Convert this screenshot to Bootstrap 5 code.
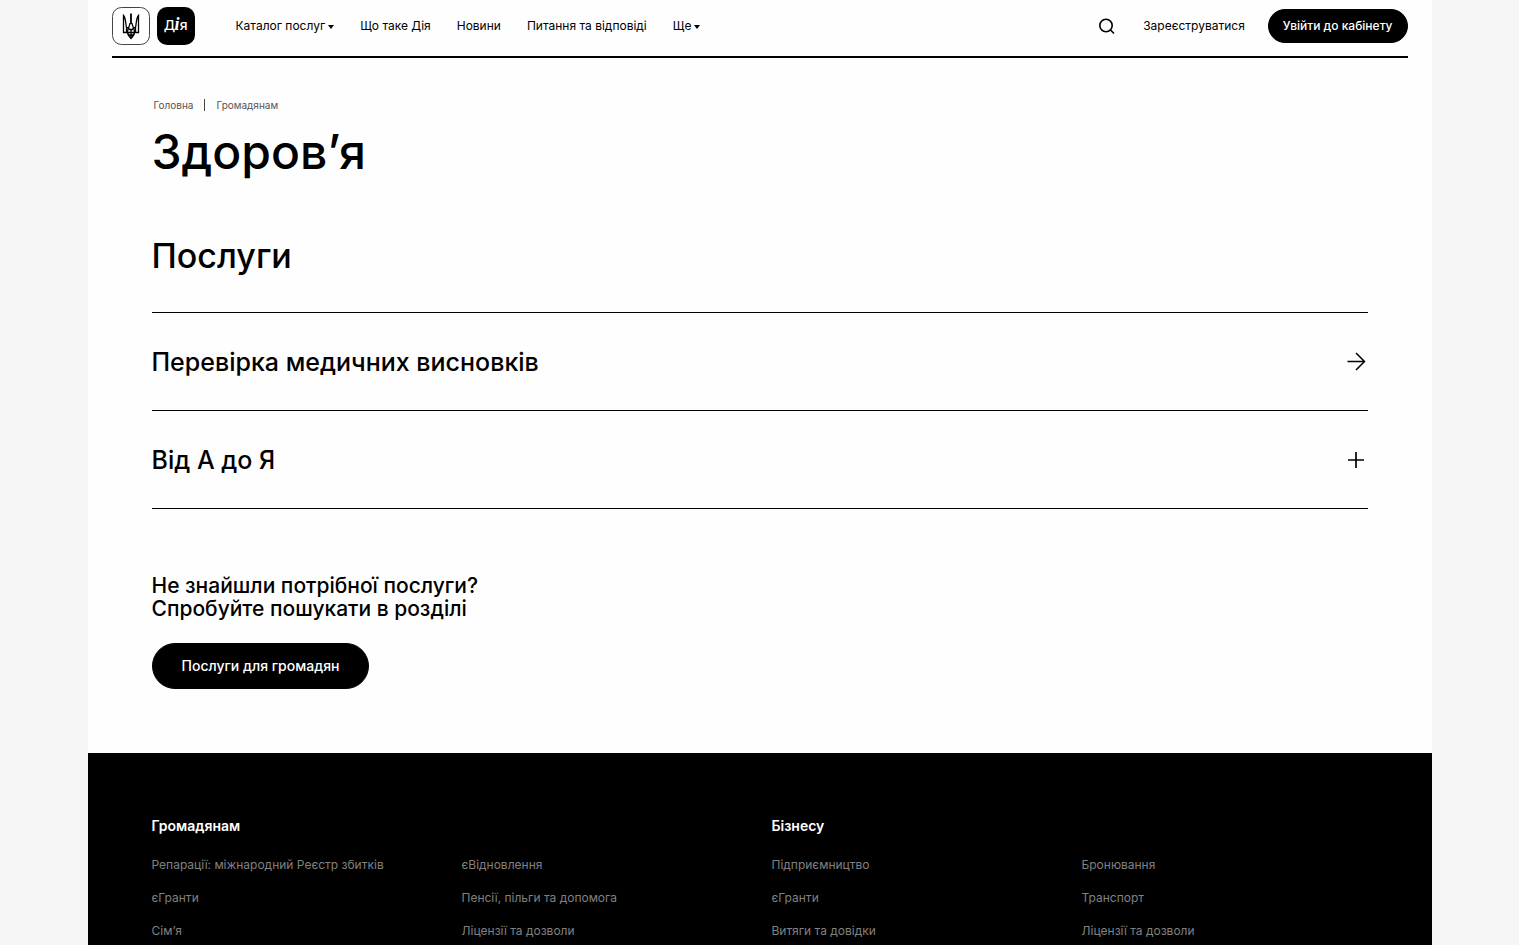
<!DOCTYPE html>
<html lang="uk">
<head>
<meta charset="utf-8">
<meta name="viewport" content="width=device-width, initial-scale=1">
<title>Здоров’я | Дія</title>
<link href="https://cdn.jsdelivr.net/npm/bootstrap@5.3.0/dist/css/bootstrap.min.css" rel="stylesheet">
<style>
  body { background: #f5f5f5; color: #000; font-family: Inter, "Liberation Sans", sans-serif; font-size: 12px; line-height: 16px; }
  a { color: inherit; text-decoration: none; }
  .shell { max-width: 1344px; background: #fefefe; }
  .topbar { height: 58px; border-bottom: 2px solid #000; padding-bottom: 4px; }
  .site-menu { gap: 26px; margin-left: 40px; }
  .menu-toggle { font-size: 12px; line-height: 16px; color: #000; }
  .menu-toggle svg { margin-left: 3px; }
  .tools { gap: 23px; }
  .btn-pill { --bs-btn-color: #fff; --bs-btn-bg: #000; --bs-btn-border-color: #000; --bs-btn-hover-color: #fff; --bs-btn-hover-bg: #333; border-radius: 50px; font-weight: 500; }
  .btn-login { font-size: 12px; line-height: 16px; padding: 8px 14px; font-weight: 450; }
  .btn-more { font-size: 14px; line-height: 20px; padding: 12px 29px; }
  .inner { padding-left: 64px; padding-right: 64px; }
  .crumbs { font-size: 10px; line-height: 14px; color: #555; padding: 40px 2px 0; gap: 11px; }
  .crumb-bar { width: 1px; height: 12px; background: #444; }
  h1 { font-size: 48px; line-height: 56px; font-weight: 500; margin: 12px 0 0; }
  h2 { font-size: 34px; line-height: 40px; font-weight: 450; margin: 56px 0 36px; }
  .service-list { border-top: 1px solid #000; }
  .service { font-size: 25px; line-height: 32px; font-weight: 450; padding: 33px 0 32px; border-bottom: 1px solid #000; color: #000; }
  .hint { font-size: 21px; line-height: 23px; font-weight: 450; margin: 65px 0 23px; }
  .site-footer { background: #000; color: #808080; margin-top: 64px; padding-top: 63px; padding-bottom: 4px; }
  .foot-title { font-size: 14px; line-height: 20px; font-weight: 600; color: #fff; margin: 0 0 21px; }
  .foot-links { display: grid; grid-template-columns: 1fr 1fr; gap: 17px 24px; }
</style>
</head>
<body>
<div class="shell mx-auto min-vh-100 d-flex flex-column">
  <header class="px-4">
    <div class="topbar d-flex align-items-center justify-content-between">
      <div class="d-flex align-items-center">
        <a href="#" class="d-flex" aria-label="Дія">
          <svg width="84" height="38" viewBox="0 0 84 38">
            <rect x=".5" y=".5" width="37" height="37" rx="9" fill="#fff" stroke="#444"/>
            <g fill="none" stroke="#000" stroke-width="1.300">
              <path d="M11.500 8.500v17h15v-17c-2.500 3-2 8-3 12-1.500 0-2.500.500-3 2h-3c-.5-1.500-1.500-2-3-2-1-4-.5-9-3-12z"/>
              <path d="M18 16c0 3-2.500 5-2.500 9.500 0 3 2 4 3.500 6 1.500-2 3.500-3 3.500-6 0-4.500-2.500-6.500-2.500-9.500M15.500 26c1 2 2 2.500 3.500 2.500s2.500-.5 3.500-2.500M19 22v9M14.500 21v4M23.500 21v4"/>
              <path d="M19 6.500V17" stroke-width="1.800"/>
            </g>
            <rect x="45" width="38" height="38" rx="10"/>
            <text x="64" y="23" fill="#fff" text-anchor="middle" font-family="Noto Sans, sans-serif" font-size="14" font-weight="500">Д<tspan font-family="Liberation Serif, serif" font-style="italic" font-weight="700" font-size="18">і</tspan>я</text>
          </svg>
        </a>
        <nav class="site-menu d-flex align-items-center">
          <button class="menu-toggle btn border-0 p-0" type="button">Каталог послуг<svg width="6" height="4" viewBox="0 0 6 4"><path d="M0 0h6L3 4z"/></svg></button>
          <a href="#">Що таке Дія</a>
          <a href="#">Новини</a>
          <a href="#">Питання та відповіді</a>
          <button class="menu-toggle btn border-0 p-0" type="button">Ще<svg width="6" height="4" viewBox="0 0 6 4"><path d="M0 0h6L3 4z"/></svg></button>
        </nav>
      </div>
      <div class="tools d-flex align-items-center">
        <button class="btn border-0 p-0 d-flex me-1" type="button" aria-label="Пошук">
          <svg width="18" height="18" viewBox="0 0 18 18" fill="none" stroke="#000" stroke-width="1.600"><circle cx="8" cy="8.500" r="6.200"/><path d="M12.500 13l3.500 3.500"/></svg>
        </button>
        <a href="#">Зареєструватися</a>
        <button class="btn btn-pill btn-login" type="button">Увійти до кабінету</button>
      </div>
    </div>
  </header>

  <main class="inner">
    <nav class="crumbs d-flex align-items-center" aria-label="Навігація">
      <a href="#">Головна</a><span class="crumb-bar"></span><a href="#">Громадянам</a>
    </nav>
    <h1>Здоров’я</h1>
    <h2>Послуги</h2>
    <div class="service-list">
      <a href="#" class="service d-flex align-items-center justify-content-between">
        Перевірка медичних висновків
        <svg width="24" height="24" viewBox="0 0 24 24" fill="none" stroke="#000" stroke-width="1.500"><path d="M3.500 11.500h17M12 3l8.500 8.500L12 20"/></svg>
      </a>
      <button type="button" class="service btn border-start-0 border-end-0 border-top-0 rounded-0 w-100 d-flex align-items-center justify-content-between">
        Від А до Я
        <svg width="24" height="24" viewBox="0 0 24 24" fill="none" stroke="#000" stroke-width="1.700"><path d="M4 12h16M12 4v16"/></svg>
      </button>
    </div>
    <p class="hint">Не знайшли потрібної послуги?<br>Спробуйте пошукати в розділі</p>
    <button class="btn btn-pill btn-more" type="button">Послуги для громадян</button>
  </main>

  <footer class="site-footer inner flex-grow-1">
    <div class="row gx-4">
      <section class="col-6">
        <h3 class="foot-title">Громадянам</h3>
        <div class="foot-links">
          <a href="#">Репарації: міжнародний Реєстр збитків</a><a href="#">єВідновлення</a>
          <a href="#">єГранти</a><a href="#">Пенсії, пільги та допомога</a>
          <a href="#">Сім’я</a><a href="#">Ліцензії та дозволи</a>
        </div>
      </section>
      <section class="col-6">
        <h3 class="foot-title">Бізнесу</h3>
        <div class="foot-links">
          <a href="#">Підприємництво</a><a href="#">Бронювання</a>
          <a href="#">єГранти</a><a href="#">Транспорт</a>
          <a href="#">Витяги та довідки</a><a href="#">Ліцензії та дозволи</a>
        </div>
      </section>
    </div>
  </footer>
</div>
<script src="https://cdn.jsdelivr.net/npm/bootstrap@5.3.0/dist/js/bootstrap.bundle.min.js"></script>
</body>
</html>
